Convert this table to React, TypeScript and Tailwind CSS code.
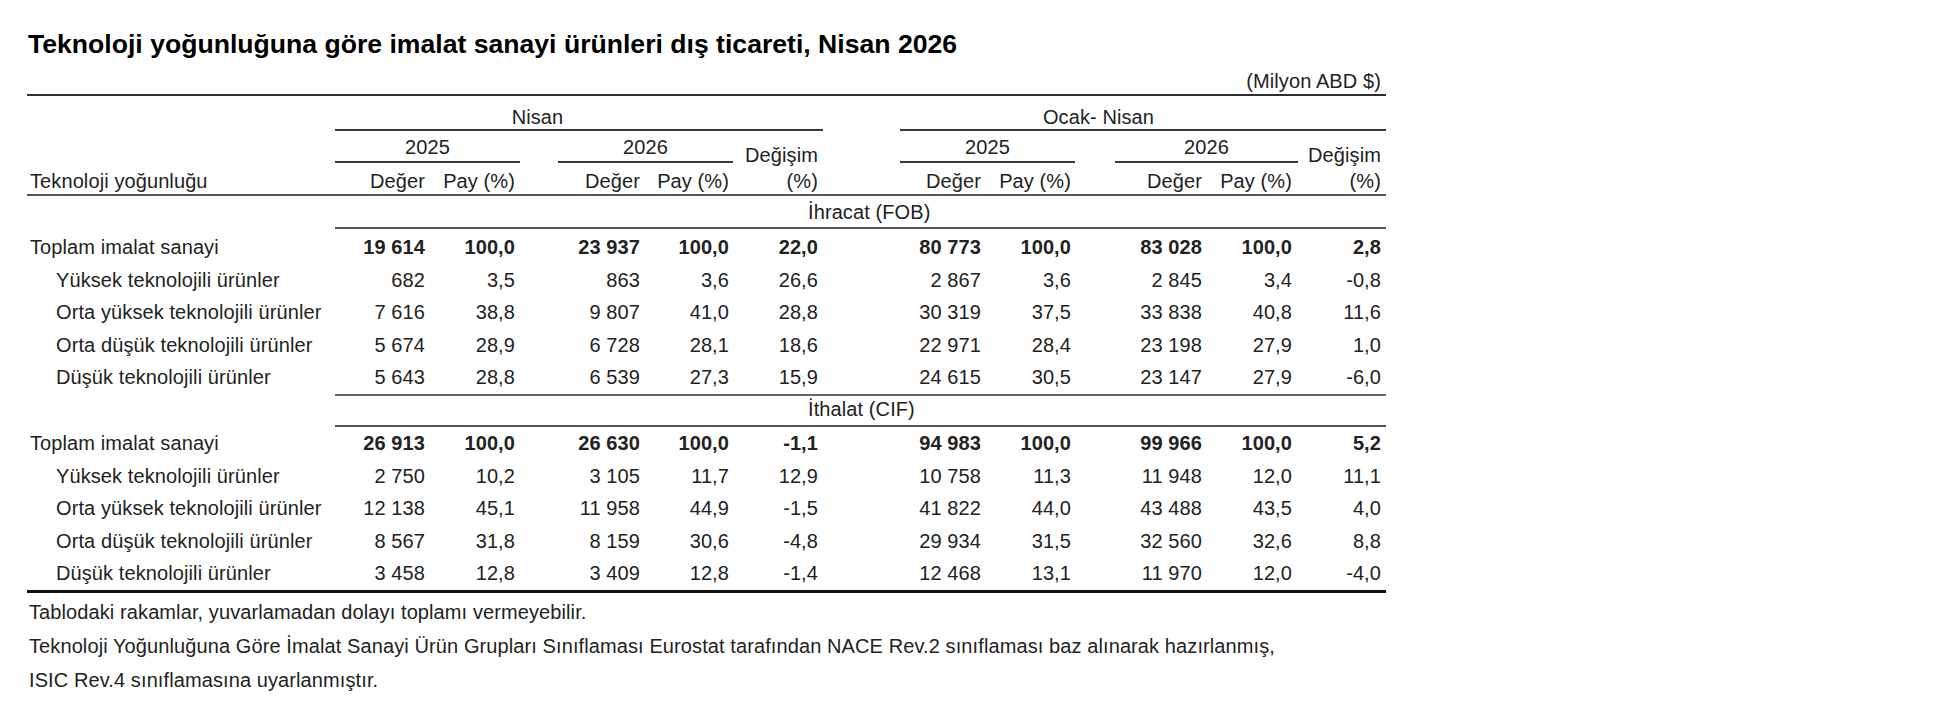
import { ReactNode } from "react";

/** Technology intensity foreign trade table (TÜİK style). Fixed pixel column grid so
 * every header block, underline and number column lines up with the data cells. */

type Row = { label: string; vals: string[]; total?: boolean };

const EXPORTS: Row[] = [
  { label: "Toplam imalat sanayi", total: true, vals: ["19 614", "100,0", "23 937", "100,0", "22,0", "80 773", "100,0", "83 028", "100,0", "2,8"] },
  { label: "Yüksek teknolojili ürünler", vals: ["682", "3,5", "863", "3,6", "26,6", "2 867", "3,6", "2 845", "3,4", "-0,8"] },
  { label: "Orta yüksek teknolojili ürünler", vals: ["7 616", "38,8", "9 807", "41,0", "28,8", "30 319", "37,5", "33 838", "40,8", "11,6"] },
  { label: "Orta düşük teknolojili ürünler", vals: ["5 674", "28,9", "6 728", "28,1", "18,6", "22 971", "28,4", "23 198", "27,9", "1,0"] },
  { label: "Düşük teknolojili ürünler", vals: ["5 643", "28,8", "6 539", "27,3", "15,9", "24 615", "30,5", "23 147", "27,9", "-6,0"] },
];

const IMPORTS: Row[] = [
  { label: "Toplam imalat sanayi", total: true, vals: ["26 913", "100,0", "26 630", "100,0", "-1,1", "94 983", "100,0", "99 966", "100,0", "5,2"] },
  { label: "Yüksek teknolojili ürünler", vals: ["2 750", "10,2", "3 105", "11,7", "12,9", "10 758", "11,3", "11 948", "12,0", "11,1"] },
  { label: "Orta yüksek teknolojili ürünler", vals: ["12 138", "45,1", "11 958", "44,9", "-1,5", "41 822", "44,0", "43 488", "43,5", "4,0"] },
  { label: "Orta düşük teknolojili ürünler", vals: ["8 567", "31,8", "8 159", "30,6", "-4,8", "29 934", "31,5", "32 560", "32,6", "8,8"] },
  { label: "Düşük teknolojili ürünler", vals: ["3 458", "12,8", "3 409", "12,8", "-1,4", "12 468", "13,1", "11 970", "12,0", "-4,0"] },
];

const COLS =
  "grid grid-cols-[308px_90px_90px_125px_89px_89px_163px_90px_131px_90px_89px_5px]";

function DataRow({ row }: { row: Row }) {
  return (
    <div className={COLS + " h-[32.5px] items-center leading-6"}>
      <span className={row.total ? "pl-[3px]" : "pl-[29px]"}>{row.label}</span>
      {row.vals.map((v, i) => (
        <span key={i} className={"text-right" + (row.total ? " font-bold" : "")}>
          {v}
        </span>
      ))}
      <span />
    </div>
  );
}

function YearBlock({
  year,
  width,
  cells,
}: {
  year: string;
  width: string;
  cells: [string, string];
}) {
  return (
    <div className={width + " flex flex-col pt-1"}>
      <div className="h-6 text-center">{year}</div>
      <div className="mt-[2px] h-[2px] bg-[#3a3a3a]" />
      <div className="flex pt-[6px] pb-[1px]">
        <span className={cells[0] + " h-6 text-right"}>Değer</span>
        <span className={cells[1] + " h-6 text-right"}>Pay (%)</span>
      </div>
    </div>
  );
}

function ChangeHead({ width }: { width: string }) {
  return (
    <div className={width + " flex flex-col pt-3 pr-[5px] text-right"}>
      <div className="h-6">Değişim</div>
      <div className="mt-[2px] h-6">(%)</div>
    </div>
  );
}

function SectionLabel({ children, pad }: { children: ReactNode; pad: string }) {
  return (
    <div className={"flex " + pad}>
      <div className="w-[308px]" />
      <div className="h-6 pl-[473px]">{children}</div>
    </div>
  );
}

const Rule = ({ cls }: { cls: string }) => <div className={cls} />;

export default function App() {
  return (
    <div className="min-h-screen bg-white pt-[29px] pl-[27px] font-['Liberation_Sans',Arial,Helvetica,sans-serif] text-[20px] leading-6 tracking-[0.1px] text-[#222]">
      <h1 className="h-[30px] pl-[1px] text-[26.6px] leading-[30px] font-bold tracking-normal text-black">
        Teknoloji yoğunluğuna göre imalat sanayi ürünleri dış ticareti, Nisan 2026
      </h1>

      <div className="w-[1359px]">
        <div className="mt-[10px] h-6 pr-[5px] text-right">(Milyon ABD $)</div>
        <Rule cls="mt-[1px] h-[2px] bg-[#2e2e2e]" />

        {/* period row */}
        <div className="flex h-[35px] items-end">
          <div className="w-[308px]" />
          <div className="w-[488px]">
            <div className="h-6 w-[405px] text-center">Nisan</div>
            <div className="h-[2px] bg-[#3a3a3a]" />
          </div>
          <div className="w-[77px]" />
          <div className="w-[486px]">
            <div className="h-6 w-[397px] text-center">Ocak- Nisan</div>
            <div className="h-[2px] bg-[#3a3a3a]" />
          </div>
        </div>

        {/* year + column heads */}
        <div className="flex">
          <div className="flex w-[308px] flex-col justify-end pb-[1px]">
            <div className="h-6 pl-[3px]">Teknoloji yoğunluğu</div>
          </div>
          <YearBlock year="2025" width="w-[185px]" cells={["w-[90px]", "w-[90px]"]} />
          <div className="w-[38px]" />
          <YearBlock year="2026" width="w-[175px]" cells={["w-[82px]", "w-[89px]"]} />
          <ChangeHead width="w-[90px]" />
          <div className="w-[77px]" />
          <YearBlock year="2025" width="w-[175px]" cells={["w-[81px]", "w-[90px]"]} />
          <div className="w-[40px]" />
          <YearBlock year="2026" width="w-[183px]" cells={["w-[87px]", "w-[90px]"]} />
          <ChangeHead width="w-[88px]" />
        </div>
        <Rule cls="h-[2px] bg-[#555]" />

        <SectionLabel pad="pt-1 pb-[3px]">İhracat (FOB)</SectionLabel>
        <Rule cls="ml-[308px] h-[2px] bg-[#555]" />
        <div className="pt-[2px]">
          {EXPORTS.map((r) => (
            <DataRow key={r.label} row={r} />
          ))}
        </div>
        <Rule cls="ml-[308px] h-[2px] bg-[#666]" />

        <SectionLabel pad="pt-[1.5px] pb-1">İthalat (CIF)</SectionLabel>
        <Rule cls="ml-[308px] h-[2px] bg-[#555]" />
        <div>
          {IMPORTS.map((r) => (
            <DataRow key={r.label} row={r} />
          ))}
        </div>
        <Rule cls="h-[3px] bg-[#111]" />
      </div>

      <div className="pt-[2.5px] pl-[2px] leading-[34px]">
        <p>Tablodaki rakamlar, yuvarlamadan dolayı toplamı vermeyebilir.</p>
        <p>
          Teknoloji Yoğunluğuna Göre İmalat Sanayi Ürün Grupları Sınıflaması Eurostat tarafından NACE
          Rev.2 sınıflaması baz alınarak hazırlanmış,
        </p>
        <p>ISIC Rev.4 sınıflamasına uyarlanmıştır.</p>
      </div>
    </div>
  );
}
